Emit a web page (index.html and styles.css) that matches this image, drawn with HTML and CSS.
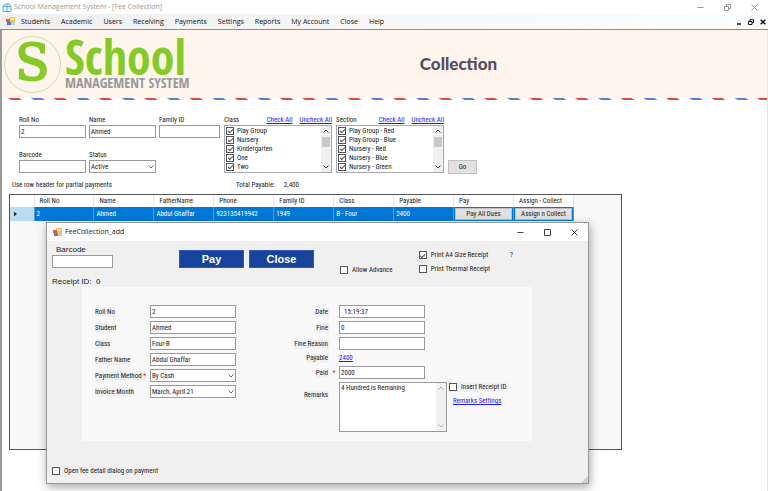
FILE: index.html
```html
<!DOCTYPE html>
<html lang="en">
<head>
  <meta charset="UTF-8" />
  <meta name="viewport" content="width=device-width, initial-scale=1.0"/>
  <title>School Management System - [Fee Collection]</title>
  <link rel="stylesheet" href="styles.css">
</head>
<body>
  <!-- shared icons -->
  <svg class="defs" width="0" height="0" aria-hidden="true">
    <symbol id="form-icon" viewBox="0 0 9 9">
      <rect x="3" y="0" width="6" height="6" fill="#f3c43c"/>
      <rect x="4" y="1" width="4" height="2" fill="#fbe59a"/>
      <rect x="0" y="2" width="4" height="3" fill="#d9604a"/>
      <rect x="1" y="5" width="4" height="3" fill="#4c7fd0"/>
      <rect x="5" y="5" width="4" height="3" fill="#c9c9c9"/>
    </symbol>
    <symbol id="down" viewBox="0 0 6 4"><path d="M.5 .5 3 3 5.5 .5" fill="none" stroke="currentColor"/></symbol>
    <symbol id="up" viewBox="0 0 6 4"><path d="M.5 3.500 3 1 5.500 3.500" fill="none" stroke="currentColor"/></symbol>
    <symbol id="min" viewBox="0 0 7 7"><path d="M.5 3.500h6" fill="none" stroke="currentColor"/></symbol>
    <symbol id="max" viewBox="0 0 7 7"><path d="M.5 .5h6v6h-6z" fill="none" stroke="currentColor"/></symbol>
    <symbol id="restore" viewBox="0 0 7 7"><path d="M.5 2.500h4v4h-4zM2.500 2V.5h4v4H5" fill="none" stroke="currentColor"/></symbol>
    <symbol id="close" viewBox="0 0 7 7"><path d="M.5 .5l6 6M6.500 .5l-6 6" fill="none" stroke="currentColor"/></symbol>
  </svg>

  <header class="titlebar">
    <svg class="app-icon" viewBox="0 0 10 9" aria-hidden="true">
      <path d="M1 3.500 3 1h4l2 2.500v5H1zM1 3.500h8M5 1v7.500" fill="#eef7fd" stroke="#5aaee0"/>
    </svg>
    <span class="caption">School Management System - [Fee Collection]</span>
    <div class="window-buttons">
      <button aria-label="Minimize"><svg><use href="#min"/></svg></button>
      <button aria-label="Restore"><svg><use href="#restore"/></svg></button>
      <button aria-label="Close window"><svg><use href="#close"/></svg></button>
    </div>
  </header>

  <nav class="menubar">
    <svg class="form-icon" aria-hidden="true"><use href="#form-icon"/></svg>
    <a href="#">Students</a>
    <a href="#">Academic</a>
    <a href="#">Users</a>
    <a href="#">Receiving</a>
    <a href="#">Payments</a>
    <a href="#">Settings</a>
    <a href="#">Reports</a>
    <a href="#">My Account</a>
    <a href="#">Close</a>
    <a href="#">Help</a>
    <div class="child-buttons">
      <button aria-label="Minimize form"><svg viewBox="0 0 6 6"><path d="M1 5h4" stroke="#111" stroke-width="1.500"/></svg></button>
      <button aria-label="Restore form"><svg viewBox="0 0 6 6"><path d="M.5 2.500h3.500v3H.5zM2 2V.7h3.500v3H4" fill="none" stroke="#111"/></svg></button>
      <button aria-label="Close form"><svg viewBox="0 0 6 6"><path d="M.7 .7l4.600 4.600M5.300 .7L.7 5.300" stroke="#111" stroke-width="1.500"/></svg></button>
    </div>
  </nav>

  <main class="workspace">
    <div class="banner">
      <div class="logo">
        <div class="logo-badge">S</div>
        <div class="logo-text">
          <span class="logo-name">School</span>
          <span class="logo-sub">MANAGEMENT SYSTEM</span>
        </div>
      </div>
      <h1>Collection</h1>
    </div>
    <svg class="stripes" aria-hidden="true">
      <defs>
        <pattern id="mail-a" width="45.300" height="3" patternUnits="userSpaceOnUse">
          <path d="M6 0h11l3 2H9z" fill="#dc4a4a"/><path d="M29 0h11l3 2H32z" fill="#5580d6"/>
        </pattern>
        <pattern id="mail-b" x="294" width="45.500" height="3" patternUnits="userSpaceOnUse">
          <path d="M6 0h11l3 2H9z" fill="#dc4a4a"/><path d="M29 0h11l3 2H32z" fill="#5580d6"/>
        </pattern>
      </defs>
      <rect width="294" height="3" fill="url(#mail-a)"/>
      <rect x="294" width="100%" height="3" fill="url(#mail-b)"/>
    </svg>

    <form class="filters">
      <div class="fields">
        <div class="field"><label for="roll">Roll No</label><input id="roll" type="text" value="2"></div>
        <div class="field"><label for="name">Name</label><input id="name" type="text" value="Ahmed"></div>
        <div class="field"><label for="family">Family ID</label><input id="family" type="text"></div>
        <div class="field"><label for="barcode">Barcode</label><input id="barcode" type="text"></div>
        <div class="field">
          <label for="status">Status</label>
          <div class="select"><select id="status"><option>Active</option></select><svg><use href="#down"/></svg></div>
        </div>
      </div>

      <div class="checklist">
        <div class="checklist-head"><span>Class</span><a href="#">Check All</a><a href="#">Uncheck All</a></div>
        <div class="checklist-box">
          <div class="items">
            <label><input type="checkbox" checked>Play Group</label>
            <label><input type="checkbox" checked>Nursery</label>
            <label><input type="checkbox" checked>Kindergarten</label>
            <label><input type="checkbox" checked>One</label>
            <label><input type="checkbox" checked>Two</label>
          </div>
          <div class="scroll"><svg><use href="#up"/></svg><i class="thumb"></i><svg><use href="#down"/></svg></div>
        </div>
      </div>

      <div class="checklist">
        <div class="checklist-head"><span>Section</span><a href="#">Check All</a><a href="#">Uncheck All</a></div>
        <div class="checklist-box">
          <div class="items">
            <label><input type="checkbox" checked>Play Group - Red</label>
            <label><input type="checkbox" checked>Play Group - Blue</label>
            <label><input type="checkbox" checked>Nursery - Red</label>
            <label><input type="checkbox" checked>Nursery - Blue</label>
            <label><input type="checkbox" checked>Nursery - Green</label>
          </div>
          <div class="scroll"><svg><use href="#up"/></svg><i class="thumb"></i><svg><use href="#down"/></svg></div>
        </div>
      </div>

      <button type="button" class="btn go">Go</button>
    </form>

    <div class="summary">
      <span class="hint">Use row header for partial payments</span>
      <span class="total">Total Payable:</span>
      <span>2,400</span>
    </div>

    <div class="grid">
      <table>
        <thead>
          <tr>
            <th class="row-head"></th><th>Roll No</th><th>Name</th><th>FatherName</th><th>Phone</th>
            <th>Family ID</th><th>Class</th><th>Payable</th><th>Pay</th><th>Assign - Collect</th>
          </tr>
        </thead>
        <tbody>
          <tr>
            <td class="row-head"><svg viewBox="0 0 4 6" aria-hidden="true"><path d="M0 0l4 3-4 3z" fill="#222"/></svg></td>
            <td>2</td><td>Ahmed</td><td>Abdul Ghaffar</td><td>923135419942</td>
            <td>1949</td><td>B - Four</td><td>2400</td>
            <td class="action"><button class="btn">Pay All Dues</button></td>
            <td class="action"><button class="btn">Assign n Collect</button></td>
          </tr>
        </tbody>
      </table>
    </div>
  </main>

  <section class="dialog" role="dialog" aria-labelledby="dialog-title">
    <header class="dialog-bar">
      <svg class="form-icon" aria-hidden="true"><use href="#form-icon"/></svg>
      <span class="caption" id="dialog-title">FeeCollection_add</span>
      <div class="window-buttons">
        <button aria-label="Minimize dialog"><svg><use href="#min"/></svg></button>
        <button aria-label="Maximize dialog"><svg><use href="#max"/></svg></button>
        <button aria-label="Close dialog"><svg><use href="#close"/></svg></button>
      </div>
    </header>

    <div class="dialog-top">
      <div class="receipt">
        <label for="scan">Barcode</label>
        <input id="scan" type="text">
        <p>Receipt ID:&nbsp; 0</p>
      </div>
      <div class="actions">
        <button class="primary">Pay</button>
        <button class="primary">Close</button>
      </div>
      <label class="check allow"><input type="checkbox">Allow Advance</label>
      <div class="prints">
        <label class="check"><input type="checkbox" checked>Print A4 Size Receipt</label>
        <label class="check"><input type="checkbox">Print Thermal Receipt</label>
      </div>
      <span class="help">?</span>
    </div>

    <div class="panel">
      <div class="form-left">
        <label for="d-roll">Roll No</label><input id="d-roll" type="text" value="2">
        <label for="d-student">Student</label><input id="d-student" type="text" value="Ahmed">
        <label for="d-class">Class</label><input id="d-class" type="text" value="Four-B">
        <label for="d-father">Father Name</label><input id="d-father" type="text" value="Abdul Ghaffar">
        <label for="d-method">Payment Method <b>*</b></label>
        <div class="select"><select id="d-method"><option>By Cash</option></select><svg><use href="#down"/></svg></div>
        <label for="d-month">Invoice Month</label>
        <div class="select"><select id="d-month"><option>March, April 21</option></select><svg><use href="#down"/></svg></div>
      </div>

      <div class="form-right">
        <label for="d-date">Date</label><i></i><input id="d-date" class="date" type="text" value="15:19:37">
        <label for="d-fine">Fine</label><i></i><input id="d-fine" type="text" value="0">
        <label for="d-reason">Fine Reason</label><i></i><input id="d-reason" type="text">
        <span class="tag">Payable</span><i></i><a href="#">2400</a>
        <label for="d-paid">Paid</label><b>*</b><input id="d-paid" type="text" value="2000">
        <label class="remarks-label" for="d-remarks">Remarks</label><i></i>
        <div class="remarks">
          <textarea id="d-remarks">4 Hundred is Remaning</textarea>
          <div class="scroll off"><svg><use href="#up"/></svg><svg><use href="#down"/></svg></div>
        </div>
      </div>

      <div class="extras">
        <label class="check"><input type="checkbox">Insert Receipt ID</label>
        <a href="#">Remarks Settings</a>
      </div>
    </div>

    <footer class="dialog-foot">
      <label class="check"><input type="checkbox">Open fee detail dialog on payment</label>
      <svg class="grip" viewBox="0 0 6 6" aria-hidden="true"><path d="M4 0h2v6H0V4h2V2h2z" fill="#cfcfcf"/></svg>
    </footer>
  </section>
</body>
</html>
```

FILE: styles.css
```css
* {
  box-sizing: border-box;
  margin: 0;
  padding: 0;
}

body {
  background: #fff;
  color: #222;
  font-family: "Roboto Condensed", Roboto, "Liberation Sans", sans-serif;
  font-size: 7px;
  line-height: 10px;
  display: flex;
  flex-direction: column;
  min-height: 100vh;
  overflow: hidden;
}

.defs {
  position: absolute;
}

input, select, textarea, button {
  font: inherit;
  color: inherit;
}

button {
  background: none;
  border: none;
}

a {
  color: #1a1aff;
}

/* window chrome */
.titlebar, .menubar, .dialog-bar {
  display: flex;
  align-items: center;
  font-family: "Open Sans", "Noto Sans", sans-serif;
}

.titlebar {
  height: 14px;
  padding-left: 2px;
  color: #999;
}

.app-icon {
  width: 10px;
  height: 9px;
  margin-right: 2px;
}

.form-icon {
  width: 9px;
  height: 9px;
}

.window-buttons {
  display: flex;
  margin-left: auto;
}

.window-buttons button {
  width: 27px;
  display: flex;
  justify-content: center;
}

.window-buttons svg {
  width: 7px;
  height: 7px;
}

.menubar {
  height: 16px;
  padding: 0 2px 0 6px;
  gap: 11px;
  background: linear-gradient(90deg, #f0f0f0, #fdfdfd);
  border-bottom: 1px solid #8c8c8c;
}

.menubar a {
  color: #111;
  text-decoration: none;
}

.menubar .form-icon {
  margin-right: -5px;
}

.child-buttons {
  display: flex;
  gap: 6px;
  margin-left: auto;
}

.child-buttons svg {
  display: block;
  width: 6px;
  height: 6px;
}

.workspace {
  flex: 1;
  border-left: 2px solid #999;
  border-right: 1px solid #e8e8e8;
}

/* banner */
.banner {
  display: grid;
  grid-template-columns: 1fr auto 1fr;
  align-items: center;
  height: 68px;
  background: #fff5ec;
}

.logo {
  display: flex;
  align-items: center;
  gap: 4px;
  padding-left: 2px;
  color: #84cb26;
}

.logo-badge {
  width: 57px;
  height: 57px;
  border: 1px solid #c5e3a0;
  border-radius: 50%;
  font: 50px/53px "DejaVu Serif", serif;
  text-align: center;
  -webkit-text-stroke: 2px #84cb26;
}

.logo-text {
  display: flex;
  flex-direction: column;
  font-family: "Open Sans Condensed", "Roboto Condensed", sans-serif;
  font-weight: bold;
}

.logo-name {
  font-size: 48px;
  line-height: 38px;
}

.logo-sub {
  font-size: 14px;
  line-height: 14px;
  color: #999;
}

h1 {
  font: 900 17px/20px Lato, sans-serif;
  color: #564c60;
}

.banner h1 {
  grid-column: 2;
  margin-left: 148px;
}

.stripes {
  display: block;
  width: 100%;
  height: 3px;
}

/* fields */
input[type="text"], select, textarea {
  width: 100%;
  height: 13px;
  padding: 0 1px;
  background: #fff;
  border: 1px solid #999;
  border-radius: 0;
  outline: none;
}

select {
  appearance: none;
}

.select {
  display: grid;
  align-items: center;
}

.select > * {
  grid-area: 1 / 1;
}

.select svg {
  width: 6px;
  height: 4px;
  margin-right: 2px;
  justify-self: end;
  color: #666;
  pointer-events: none;
}

input[type="checkbox"] {
  appearance: none;
  flex: none;
  width: 8px;
  height: 8px;
  background: #fff;
  border: 1px solid #555;
}

input[type="checkbox"]:checked {
  display: grid;
  place-items: center;
}

input[type="checkbox"]:checked::before {
  content: "";
  width: 4px;
  height: 2px;
  border-left: 1px solid #555;
  border-bottom: 1px solid #555;
  transform: rotate(-45deg);
}

.check {
  display: flex;
  align-items: center;
  gap: 4px;
  white-space: nowrap;
}

.btn {
  background: #e1e1e1;
  border: 1px solid #c0c0c0;
  white-space: nowrap;
}

/* filters */
.filters {
  display: flex;
  align-items: flex-start;
  gap: 4px;
  padding: 14px 17px 0;
}

.fields {
  display: grid;
  grid-template-columns: 67px 67px 61px;
  gap: 12px 3px;
}

.field {
  display: flex;
  flex-direction: column;
}

.checklist {
  width: 108px;
}

.checklist-head {
  display: flex;
  gap: 7px;
}

.checklist-head span {
  margin-right: auto;
}

.checklist-box {
  display: flex;
  justify-content: space-between;
  height: 48px;
  border: 1px solid #a5a8b0;
}

.items label {
  display: flex;
  align-items: center;
  gap: 3px;
  height: 9px;
  padding-left: 1px;
}

.scroll {
  display: flex;
  flex-direction: column;
  align-items: center;
  width: 10px;
  padding: 3px 0;
  background: #f0f0f0;
  color: #444;
}

.scroll svg {
  width: 6px;
  height: 4px;
}

.scroll svg:last-child {
  margin-top: auto;
}

.scroll.off {
  color: #aaa;
}

.thumb {
  width: 8px;
  height: 10px;
  margin-top: 4px;
  background: #c8c8c8;
}

.go {
  width: 29px;
  height: 14px;
  margin-top: 45px;
}

.summary {
  display: flex;
  gap: 9px;
  padding: 6px 10px 4px;
}

.hint {
  width: 215px;
}

/* fee table */
.grid {
  width: 613px;
  max-width: 98%;
  height: 256px;
  margin-left: 7px;
  background: #f8f8f8;
  border: 1px solid #555;
}

table {
  table-layout: fixed;
  width: 564px;
  border-collapse: collapse;
}

th {
  height: 12px;
  padding-left: 5px;
  background: #fff;
  border-right: 1px solid #e5e5e5;
  font-weight: normal;
  text-align: left;
}

td {
  height: 14px;
  padding-left: 2px;
  background: #0078d7;
  border-right: 1px solid #4b9de0;
  color: #fff;
}

.row-head {
  width: 24px;
}

td.row-head {
  background: #bcdcf4;
  padding-left: 4px;
}

.row-head svg {
  display: block;
  width: 3px;
  height: 6px;
}

td.action {
  padding: 1px;
}

.action .btn {
  display: block;
  width: 100%;
  height: 12px;
  color: #222;
}

/* dialog window */
.dialog {
  position: absolute;
  left: 46px;
  top: 222px;
  width: 543px;
  display: flex;
  flex-direction: column;
  background: #f0f0f0;
  border: 1px solid #999;
  box-shadow: 1px 3px 9px rgba(0, 0, 0, 0.35);
}

.dialog-bar {
  height: 18px;
  padding-left: 6px;
  gap: 3px;
  background: #fff;
}

.dialog-bar button {
  color: #444;
}

.dialog-top {
  display: flex;
  align-items: flex-start;
  height: 46px;
  padding: 3px 5px 0;
}

.receipt {
  width: 127px;
  font-family: "Liberation Sans", Arial, sans-serif;
  font-size: 8px;
}

.receipt label {
  display: block;
  padding-left: 4px;
  line-height: 11px;
}

.receipt input {
  display: block;
  width: 61px;
}

.receipt p {
  margin-top: 9px;
}

.actions {
  display: flex;
  gap: 5px;
  padding-top: 6px;
}

.primary {
  width: 65px;
  height: 18px;
  background: #18439c;
  border: 1px solid #2d5bc0;
  color: #fff;
  font: bold 11px/14px "Liberation Sans", Arial, sans-serif;
}

.allow {
  margin: 21px 26px 0;
}

.prints {
  display: flex;
  flex-direction: column;
  gap: 4px;
  padding-top: 6px;
}

.help {
  margin: 6px 0 0 20px;
}

.panel {
  display: flex;
  align-items: flex-start;
  margin: 0 56px 0 35px;
  padding: 18px 13px 9px;
  background: #f9f9f9;
}

.form-left {
  display: grid;
  grid-template-columns: 55px 86px;
  gap: 3px 0;
  align-items: center;
}

.form-right {
  display: grid;
  grid-template-columns: 84px 10px 86px;
  gap: 3px 0;
  align-items: center;
  margin-left: 9px;
}

.panel label, .tag {
  justify-self: start;
  background: #f1f1f1;
  white-space: nowrap;
}

.form-right label, .tag {
  justify-self: end;
  padding-right: 1px;
}

.form-right .remarks-label {
  align-self: start;
  margin-top: 8px;
}

.panel b {
  color: #e02020;
  font-weight: normal;
}

.form-right b {
  justify-self: center;
}

.date {
  text-indent: 3px;
}

.remarks {
  display: flex;
  width: 108px;
  height: 50px;
  background: #fff;
  border: 1px solid #999;
}

.remarks textarea {
  flex: 1;
  min-width: 0;
  height: 100%;
  border: none;
  resize: none;
  overflow: hidden;
}

.extras {
  display: flex;
  flex-direction: column;
  gap: 4px;
  margin: 77px 0 0 24px;
}

.extras a {
  padding-left: 4px;
}

.dialog-foot {
  display: flex;
  justify-content: space-between;
  align-items: flex-end;
  height: 42px;
  padding-left: 5px;
}

.dialog-foot .check {
  padding-bottom: 7px;
}

.grip {
  width: 6px;
  height: 6px;
}
```
